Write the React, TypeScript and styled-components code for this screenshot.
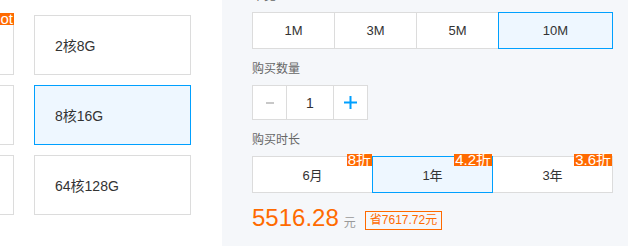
import React from 'react';
import styled, { createGlobalStyle } from 'styled-components';

const GlobalStyle = createGlobalStyle`
  html, body {
    margin: 0;
    padding: 0;
    background: #fff;
    overflow: hidden;
  }
  * {
    box-sizing: border-box;
  }
`;

const FONT = `"Liberation Sans", "Noto Sans CJK SC", Arial, sans-serif`;
const ORANGE = '#ff6a00';
const BLUE = '#00a0ff';

const Page = styled.div`
  display: flex;
  width: 628px;
  height: 246px;
  font-family: ${FONT};
  color: #333;
  overflow: hidden;
`;

const SpecPane = styled.div`
  width: 222px;
  flex-shrink: 0;
  background: #fff;
  overflow: hidden;
`;

const SpecGrid = styled.div`
  display: grid;
  grid-template-columns: 157px 157px;
  gap: 10px 20px;
  margin-left: -143px;
  padding-top: 15px;
`;

const SpecCard = styled.div<{ $active?: boolean }>`
  position: relative;
  height: 60px;
  display: flex;
  align-items: center;
  padding-left: 20px;
  font-size: 14px;
  border: 1px solid ${(p) => (p.$active ? BLUE : '#dcdcdc')};
  background: ${(p) => (p.$active ? '#eef7ff' : '#fff')};
`;

const Badge = styled.span<{ $edge?: number }>`
  position: absolute;
  top: -3px;
  right: ${(p) => p.$edge ?? 0}px;
  height: 12px;
  padding: 0 1px;
  background: ${ORANGE};
  color: #fff;
  font-size: 15px;
  line-height: 12px;
  white-space: nowrap;
  z-index: 2;
`;

const OrderPane = styled.div`
  flex: 1;
  background: #f5f7fa;
  padding-left: 30px;
  display: flex;
  flex-direction: column;
  gap: 10px;
`;

const Field = styled.div<{ $first?: boolean }>`
  display: flex;
  flex-direction: column;
  gap: 6px;
  margin-top: ${(p) => (p.$first ? '-14px' : '0')};
`;

const Label = styled.div`
  font-size: 12px;
  line-height: 20px;
  color: #666;
`;

const OptionGroup = styled.div`
  display: flex;
`;

const Option = styled.div<{ $width: number; $active?: boolean }>`
  position: relative;
  width: ${(p) => p.$width}px;
  height: 37px;
  margin-left: -1px;
  display: flex;
  align-items: center;
  justify-content: center;
  font-size: 13px;
  color: #333;
  border: 1px solid ${(p) => (p.$active ? BLUE : '#dcdcdc')};
  background: ${(p) => (p.$active ? '#eef7ff' : '#fff')};
  z-index: ${(p) => (p.$active ? 1 : 0)};
  &:first-child {
    margin-left: 0;
  }
`;

const Stepper = styled.div`
  display: flex;
  height: 35px;
`;

const StepCell = styled.div<{ $width: number }>`
  width: ${(p) => p.$width}px;
  margin-left: -1px;
  display: flex;
  align-items: center;
  justify-content: center;
  font-size: 14px;
  color: #333;
  background: #fff;
  border: 1px solid #dcdcdc;
  &:first-child {
    margin-left: 0;
  }
`;

const PriceRow = styled.div`
  display: flex;
  align-items: center;
  margin-top: 1px;
`;

const Price = styled.span`
  font-size: 24px;
  line-height: 28px;
  color: ${ORANGE};
`;

const Unit = styled.span`
  font-size: 12px;
  color: #999;
  margin: 6px 0 0 5px;
`;

const Saving = styled.span`
  margin: 4px 0 0 9px;
  height: 19px;
  padding: 0 4px;
  border: 1px solid ${ORANGE};
  color: ${ORANGE};
  font-size: 12px;
  line-height: 17px;
`;

const specs = [
  { left: '', right: '2核8G', hot: true },
  { left: '', right: '8核16G', active: true },
  { left: '', right: '64核128G' },
];

const bandwidth = [
  { label: '1M', width: 83 },
  { label: '3M', width: 83 },
  { label: '5M', width: 83 },
  { label: '10M', width: 115, active: true },
];

const durations = [
  { label: '6月', off: '8折' },
  { label: '1年', off: '4.2折', active: true },
  { label: '3年', off: '3.6折' },
];

const MinusIcon = () => (
  <svg width="8" height="2" viewBox="0 0 8 2">
    <rect width="8" height="2" fill="#c8c8c8" />
  </svg>
);

const PlusIcon = () => (
  <svg width="13" height="13" viewBox="0 0 13 13">
    <rect x="5.5" y="0" width="2" height="13" fill={BLUE} />
    <rect x="0" y="5.5" width="13" height="2" fill={BLUE} />
  </svg>
);

export default function App() {
  return (
    <>
      <GlobalStyle />
      <Page>
        <SpecPane>
          <SpecGrid>
            {specs.map((s, i) => (
              <React.Fragment key={i}>
                <SpecCard>
                  {s.hot && <Badge $edge={-1}>Hot</Badge>}
                  {s.left}
                </SpecCard>
                <SpecCard $active={s.active}>{s.right}</SpecCard>
              </React.Fragment>
            ))}
          </SpecGrid>
        </SpecPane>
        <OrderPane>
          <Field $first>
            <Label>带宽</Label>
            <OptionGroup>
              {bandwidth.map((b) => (
                <Option key={b.label} $width={b.width} $active={b.active}>
                  {b.label}
                </Option>
              ))}
            </OptionGroup>
          </Field>
          <Field>
            <Label>购买数量</Label>
            <Stepper>
              <StepCell $width={35}>
                <MinusIcon />
              </StepCell>
              <StepCell $width={48}>1</StepCell>
              <StepCell $width={35}>
                <PlusIcon />
              </StepCell>
            </Stepper>
          </Field>
          <Field>
            <Label>购买时长</Label>
            <OptionGroup>
              {durations.map((d) => (
                <Option key={d.label} $width={121} $active={d.active}>
                  <Badge>{d.off}</Badge>
                  {d.label}
                </Option>
              ))}
            </OptionGroup>
          </Field>
          <PriceRow>
            <Price>5516.28</Price>
            <Unit>元</Unit>
            <Saving>省7617.72元</Saving>
          </PriceRow>
        </OrderPane>
      </Page>
    </>
  );
}
